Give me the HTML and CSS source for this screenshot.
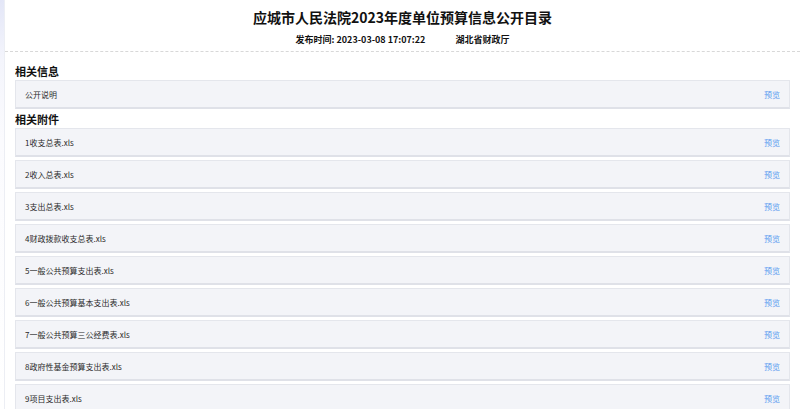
FILE: index.html
```html
<html>
<head>
<link rel="stylesheet" href="styles.css">
</head>
<body>

<div class="page">

	<div class="head">
		<h1 class="title">应城市人民法院2023年度单位预算信息公开目录</h1>
		<div class="meta">
			<span>发布时间: 2023-03-08 17:07:22</span>
			<span class="src">湖北省财政厅</span>
		</div>
	</div>

	<div class="body">
		<h3 class="sec">相关信息</h3>
		<div class="row">
			<span>公开说明</span>
			<a class="view">预览</a>
		</div>

		<h3 class="sec">相关附件</h3>
		<div class="list">
			<div class="row"><span>1收支总表.xls</span><a class="view">预览</a></div>
			<div class="row"><span>2收入总表.xls</span><a class="view">预览</a></div>
			<div class="row"><span>3支出总表.xls</span><a class="view">预览</a></div>
			<div class="row"><span>4财政拨款收支总表.xls</span><a class="view">预览</a></div>
			<div class="row"><span>5一般公共预算支出表.xls</span><a class="view">预览</a></div>
			<div class="row"><span>6一般公共预算基本支出表.xls</span><a class="view">预览</a></div>
			<div class="row"><span>7一般公共预算三公经费表.xls</span><a class="view">预览</a></div>
			<div class="row"><span>8政府性基金预算支出表.xls</span><a class="view">预览</a></div>
			<div class="row"><span>9项目支出表.xls</span><a class="view">预览</a></div>
		</div>
	</div>

</div>

</body>
</html>
```

FILE: styles.css
```css
html,body{
	margin:0;
	padding:0;
}
body{
	font-family:"Noto Sans CJK SC","Liberation Sans",sans-serif;
	color:#222;
	background:linear-gradient(180deg,#e3e6f7 0px,#f4f5fc 60px,#fbfbfe 140px,#fff 400px);
}
.page{
	margin-left:4px;
	background:#fff;
	border-left:1px solid #eceef4;
	height:409px;
	overflow:hidden;
}
.head{
	text-align:center;
	border-bottom:1px dashed #d8d8d8;
	padding-top:7px;
	padding-bottom:4px;
}
.title{
	margin:0;
	font-size:14px;
	font-weight:bold;
	line-height:20px;
	color:#111;
}
.meta{
	font-size:9px;
	font-weight:bold;
	line-height:14px;
	margin-top:6px;
	color:#111;
}
.meta .src{
	margin-left:28px;
}
.body{
	padding:11px 10px 0 10px;
}
.sec{
	margin:1px 0 2px 0;
	font-size:11px;
	font-weight:bold;
	line-height:14px;
	color:#111;
}
.row{
	display:flex;
	justify-content:space-between;
	align-items:center;
	height:26px;
	padding:0 9px 0 9px;
	background:#f3f4f8;
	border:1px solid #e4e6ec;
	border-bottom:2px solid #dfe1e8;
	font-size:8px;
	color:#2a2a2a;
	margin-bottom:3px;
}
.view{
	color:#5b9cf0;
	font-size:8px;
	cursor:pointer;
}
```
